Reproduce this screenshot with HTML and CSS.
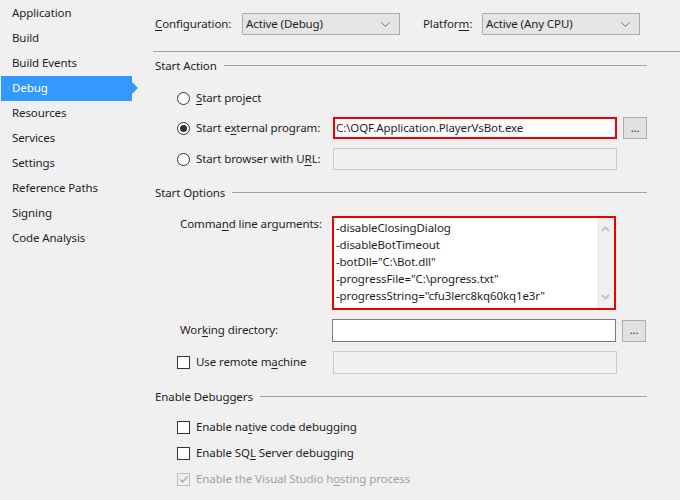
FILE: index.html
```html
<!DOCTYPE html>
<html>
<head>
<meta charset="utf-8">
<link rel="stylesheet" href="styles.css">
</head>
<body>
<div class="page">
  <nav class="sidebar">
    <div class="nav-item">Application</div>
    <div class="nav-item">Build</div>
    <div class="nav-item">Build Events</div>
    <div class="nav-item active">Debug</div>
    <div class="nav-item">Resources</div>
    <div class="nav-item">Services</div>
    <div class="nav-item">Settings</div>
    <div class="nav-item">Reference Paths</div>
    <div class="nav-item">Signing</div>
    <div class="nav-item">Code Analysis</div>
  </nav>
  <main class="main">
    <div class="topbar">
      <span class="top-label cfg-label"><u>C</u>onfiguration:</span>
      <div class="select">
        <span>Active (Debug)</span>
        <svg class="chev" width="9" height="5" viewBox="0 0 9 5"><path d="M0.5 0.5 L4.5 4.5 L8.5 0.5" fill="none" stroke="#707070" stroke-width="1"/></svg>
      </div>
      <span class="top-label plat-label">Platfor<u>m</u>:</span>
      <div class="select">
        <span>Active (Any CPU)</span>
        <svg class="chev" width="9" height="5" viewBox="0 0 9 5"><path d="M0.5 0.5 L4.5 4.5 L8.5 0.5" fill="none" stroke="#707070" stroke-width="1"/></svg>
      </div>
    </div>
    <div class="hr"></div>

    <div class="section-head h-action"><span class="t">Start Action</span><i class="rule"></i></div>

    <div class="row r-project">
      <span class="radio"></span><span class="opt-text"><u>S</u>tart project</span>
    </div>
    <div class="row r-external">
      <span class="radio checked"></span><span class="opt-text lbl-w">Start e<u>x</u>ternal program:</span>
      <div class="box red"><span class="t">C:\OQF.Application.PlayerVsBot.exe</span></div>
      <div class="btn">...</div>
    </div>
    <div class="row r-url">
      <span class="radio"></span><span class="opt-text lbl-w">Start browser with U<u>R</u>L:</span>
      <div class="box disabled"></div>
    </div>

    <div class="section-head h-options"><span class="t">Start Options</span><i class="rule"></i></div>

    <div class="row r-cmd">
      <span class="field-label">Comma<u>n</u>d line arguments:</span>
      <div class="textarea">
        <div class="lines">
          <div>-disableClosingDialog</div>
          <div>-disableBotTimeout</div>
          <div>-botDll="C:\Bot.dll"</div>
          <div>-progressFile="C:\progress.txt"</div>
          <div>-progressString="cfu3lerc8kq60kq1e3r"</div>
        </div>
        <div class="scroll">
          <svg width="9" height="6" viewBox="0 0 9 6"><path d="M1 5 L4.5 1.5 L8 5" fill="none" stroke="#c2c2c2" stroke-width="2"/></svg>
          <svg width="9" height="6" viewBox="0 0 9 6"><path d="M1 1 L4.5 4.5 L8 1" fill="none" stroke="#c2c2c2" stroke-width="2"/></svg>
        </div>
      </div>
    </div>
    <div class="row r-work">
      <span class="field-label">Wor<u>k</u>ing directory:</span>
      <div class="box plain"></div>
      <div class="btn">...</div>
    </div>
    <div class="row r-remote">
      <span class="check"></span><span class="opt-text lbl-w">Use remote m<u>a</u>chine</span>
      <div class="box disabled"></div>
    </div>

    <div class="section-head h-debug"><span class="t">Enable Debuggers</span><i class="rule"></i></div>

    <div class="row r-native">
      <span class="check"></span><span class="opt-text">Enable na<u>t</u>ive code debugging</span>
    </div>
    <div class="row r-sql">
      <span class="check"></span><span class="opt-text">Enable SQ<u>L</u> Server debugging</span>
    </div>
    <div class="row r-host">
      <span class="check dis">
        <svg width="11" height="11" viewBox="0 0 11 11"><path d="M2 5.5 L4.5 8 L9.5 2.5" fill="none" stroke="#a8a8a8" stroke-width="1.3"/></svg>
      </span><span class="opt-text gray">Enable the Visual Studio h<u>o</u>sting process</span>
    </div>
  </main>
</div>
</body>
</html>
```

FILE: styles.css
```css
* { box-sizing: border-box; }
html, body { margin: 0; padding: 0; }
body {
  background: #f0f0f0;
  font-family: "Noto Sans", "Open Sans", sans-serif;
  font-size: 11.5px;
  letter-spacing: -0.1px;
  color: #1e1e1e;
  width: 680px;
  height: 500px;
  overflow: hidden;
}
u { text-decoration: underline; text-underline-offset: 2px; }
.page { display: flex; height: 500px; }
.t { padding-bottom: 2px; }

.sidebar {
  width: 153px;
  flex: none;
  padding-top: 1px;
  padding-left: 1px;
}
.nav-item {
  height: 25px;
  width: 131px;
  display: flex;
  align-items: center;
  padding-left: 11px;
  padding-bottom: 2px;
  position: relative;
}
.nav-item.active {
  background: #3399ff;
  color: #fff;
}
.nav-item.active::after {
  content: "";
  position: absolute;
  left: 131px;
  top: 6px;
  border-top: 6px solid transparent;
  border-bottom: 6px solid transparent;
  border-left: 6px solid #3399ff;
}

.main { flex: 1; display: flex; flex-direction: column; }

.topbar {
  height: 51px;
  display: flex;
  align-items: flex-start;
  padding-top: 13px;
  padding-left: 2px;
}
.top-label { height: 22px; display: flex; align-items: center; padding-bottom: 2px; }
.cfg-label { width: 87px; }
.plat-label { margin-left: 23px; width: 59px; }
.select {
  width: 158px;
  height: 22px;
  background: #e5e5e5;
  border: 1px solid #acacac;
  display: flex;
  align-items: center;
  justify-content: space-between;
  padding: 0 9px 0 3px;
}
.select span { padding-bottom: 2px; }
.chev { display: block; }

.hr { height: 1px; background: #a0a0a0; }

.section-head {
  height: 20px;
  display: flex;
  align-items: center;
  padding-left: 2px;
  margin-right: 33px;
}
.section-head .rule {
  flex: 1;
  height: 1px;
  background: #a0a0a0;
  margin-left: 7px;
  margin-top: -1px;
}
.h-action { margin-top: 4px; }
.h-options { margin-top: 13px; }
.h-debug { margin-top: 13px; }

.row {
  display: flex;
  align-items: center;
  padding-left: 24px;
  height: 22px;
}
.r-project { margin-top: 11px; }
.r-external { margin-top: 8px; }
.r-url { margin-top: 9px; }
.r-cmd { margin-top: 13px; height: 94px; align-items: flex-start; padding-left: 27px; }
.r-work { margin-top: 9px; height: 23px; padding-left: 27px; }
.r-remote { margin-top: 9px; height: 23px; }
.r-native { margin-top: 11px; height: 18px; }
.r-sql { margin-top: 8px; height: 18px; }
.r-host { margin-top: 8px; height: 18px; }

.radio {
  width: 13px; height: 13px;
  border: 1px solid #333;
  border-radius: 50%;
  background: #fff;
  flex: none;
  display: flex;
  align-items: center;
  justify-content: center;
}
.radio.checked::after {
  content: "";
  width: 7px; height: 7px;
  border-radius: 50%;
  background: #333;
}
.check {
  width: 13px; height: 13px;
  border: 1px solid #333;
  background: #fff;
  flex: none;
  display: flex;
  align-items: center;
  justify-content: center;
}
.check.dis { border-color: #bcbcbc; background: #f0f0f0; }
.check svg { display: block; }
.opt-text { margin-left: 6px; white-space: nowrap; padding-bottom: 2px; }
.lbl-w { width: 137px; flex: none; }
.gray { color: #a0a0a0; }
.field-label { width: 152px; flex: none; white-space: nowrap; padding-bottom: 2px; }
.r-cmd .field-label { line-height: 16px; padding-bottom: 0; }

.box {
  width: 284px;
  height: 22px;
  flex: none;
  display: flex;
  align-items: center;
  padding-left: 3px;
  white-space: nowrap;
}
.r-work .box, .r-remote .box { height: 23px; }
.box.red { border: 2px solid #f00000; background: #fff; padding-left: 1px; }
.box.disabled { border: 1px solid #cccccc; background: #f0f0f0; }
.box.plain { border: 1px solid #7a7a7a; background: #fff; }

.btn {
  width: 24px;
  height: 22px;
  margin-left: 6px;
  background: #e1e1e1;
  border: 1px solid #adadad;
  display: flex;
  align-items: center;
  justify-content: center;
  font-size: 11px;
  line-height: 1;
  padding-bottom: 2px;
}

.textarea {
  width: 284px;
  height: 94px;
  flex: none;
  border: 2px solid #f00000;
  background: #fff;
  display: flex;
}
.lines {
  flex: 1;
  padding: 1px 0 0 2px;
  line-height: 17px;
  white-space: nowrap;
  overflow: hidden;
}
.scroll {
  width: 17px;
  background: #f0f0f0;
  display: flex;
  flex-direction: column;
  align-items: center;
  justify-content: space-between;
  padding: 8px 0 8px;
}
.scroll svg { display: block; }
```
